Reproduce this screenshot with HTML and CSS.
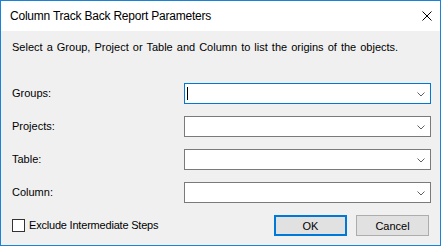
FILE: index.html
```html
<!DOCTYPE html>
<html lang="en">
<head>
  <meta charset="UTF-8"/>
  <title>Column Track Back Report Parameters</title>
  <link rel="stylesheet" href="styles.css">
</head>
<body>

<div class="window">
  <div class="titlebar">
    <span class="title">Column Track Back Report Parameters</span>
    <svg class="close" width="10" height="10" viewBox="0 0 10 10">
      <path d="M0.5 0.5 L9.5 9.5 M9.5 0.5 L0.5 9.5" stroke="#000" stroke-width="1"/>
    </svg>
  </div>

  <div class="content">
    <p class="intro">Select a Group, Project or Table and Column to list the origins of the objects.</p>

    <div class="fields">
      <label>Groups:</label>
      <div class="combo focused">
        <span class="caret"></span>
        <svg class="chevron" width="8" height="5" viewBox="0 0 8 5">
          <path d="M0.5 0.5 L4 4 L7.5 0.5" fill="none" stroke="#606060" stroke-width="1"/>
        </svg>
      </div>

      <label>Projects:</label>
      <div class="combo">
        <svg class="chevron" width="8" height="5" viewBox="0 0 8 5">
          <path d="M0.5 0.5 L4 4 L7.5 0.5" fill="none" stroke="#606060" stroke-width="1"/>
        </svg>
      </div>

      <label>Table:</label>
      <div class="combo">
        <svg class="chevron" width="8" height="5" viewBox="0 0 8 5">
          <path d="M0.5 0.5 L4 4 L7.5 0.5" fill="none" stroke="#606060" stroke-width="1"/>
        </svg>
      </div>

      <label>Column:</label>
      <div class="combo">
        <svg class="chevron" width="8" height="5" viewBox="0 0 8 5">
          <path d="M0.5 0.5 L4 4 L7.5 0.5" fill="none" stroke="#606060" stroke-width="1"/>
        </svg>
      </div>
    </div>

    <div class="footer">
      <label class="check">
        <span class="box"></span>
        Exclude Intermediate Steps
      </label>
      <div class="buttons">
        <button class="btn default">OK</button>
        <button class="btn">Cancel</button>
      </div>
    </div>
  </div>
</div>

</body>
</html>
```

FILE: styles.css
```css
* {
  margin: 0;
  padding: 0;
  box-sizing: border-box;
}

body {
  background: #fff;
  font-family: "Liberation Sans", Arial, sans-serif;
  font-size: 11px;
  color: #000;
}

.window {
  width: 441px;
  height: 246px;
  border: 1px solid #1883d7;
  display: flex;
  flex-direction: column;
}

.titlebar {
  height: 30px;
  background: #fff;
  display: flex;
  align-items: center;
  justify-content: space-between;
  padding: 0 8px 0 9px;
}

.title {
  font-size: 12px;
  letter-spacing: -0.22px;
}

.close {
  display: block;
  margin-top: -1px;
}

.content {
  flex: 1;
  background: #f0f0f0;
  padding: 10px 9px 0 11px;
}

.intro {
  line-height: 13px;
  word-spacing: 1px;
}

.fields {
  display: grid;
  grid-template-columns: 172px 247px;
  row-gap: 12px;
  margin-top: 29px;
  align-items: center;
}

.fields label {
  line-height: 13px;
  margin-top: -1px;
}

.combo {
  height: 21px;
  background: #fff;
  border: 1px solid #7a7a7a;
  display: flex;
  align-items: center;
  justify-content: space-between;
  padding: 0 5px 0 2px;
}

.combo.focused {
  border-color: #0078d7;
}

.caret {
  width: 1px;
  height: 13px;
  background: #000;
}

.chevron {
  display: block;
  margin-left: auto;
  margin-top: 1px;
}

.footer {
  display: flex;
  align-items: center;
  justify-content: space-between;
  margin-top: 12px;
  padding-right: 2px;
}

.check {
  display: flex;
  align-items: center;
  gap: 4px;
  line-height: 13px;
  letter-spacing: -0.2px;
}

.box {
  width: 13px;
  height: 13px;
  background: #fff;
  border: 1px solid #333;
}

.buttons {
  display: flex;
  gap: 9px;
}

.btn {
  width: 73px;
  height: 21px;
  background: #e1e1e1;
  border: 1px solid #adadad;
  font-family: inherit;
  font-size: 11px;
  color: #000;
}

.btn.default {
  border: 2px solid #0078d7;
}
```
